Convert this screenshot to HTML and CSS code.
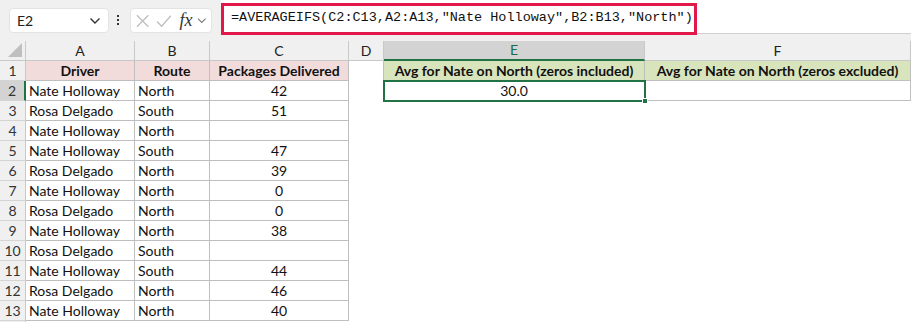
FILE: index.html
```html
<!DOCTYPE html>
<html>
<head>
<meta charset="utf-8">
<link rel="stylesheet" href="styles.css">
</head>
<body>
<div class="app">
  <div class="topbar">
    <div class="namebox">
      <span class="nb-text">E2</span>
      <svg class="chev" width="12" height="8" viewBox="0 0 12 8"><path d="M1.5 1.5 L6 6 L10.5 1.5" fill="none" stroke="#333" stroke-width="1.4"/></svg>
    </div>
    <div class="dots"><span></span><span></span><span></span></div>
    <div class="fxbox">
      <svg width="16" height="16" viewBox="0 0 16 16"><path d="M2 2 L14 14 M14 2 L2 14" stroke="#bdbdbd" stroke-width="1.3" fill="none"/></svg>
      <svg width="18" height="16" viewBox="0 0 18 16"><path d="M2 8.5 L7 13.5 L16.5 2.5" stroke="#bdbdbd" stroke-width="1.3" fill="none"/></svg>
      <span class="fx">fx</span>
      <svg width="10" height="7" viewBox="0 0 10 7"><path d="M1 1.5 L5 5.5 L9 1.5" fill="none" stroke="#777" stroke-width="1.1"/></svg>
    </div>
    <div class="formula">
      <span class="ftext">=AVERAGEIFS(C2:C13,A2:A13,"Nate Holloway",B2:B13,"North")</span>
      <div class="redbox"></div>
    </div>
  </div>
  <div class="grid">
    <div class="corner"><svg width="14" height="14" viewBox="0 0 14 14"><path d="M14 0 L14 14 L0 14 Z" fill="#bfbfbf"/></svg></div>
    <div class="ch">A</div><div class="ch">B</div><div class="ch">C</div><div class="ch">D</div><div class="ch sel">E</div><div class="ch">F</div>

    <div class="rh">1</div><div class="c bd hp b ctr">Driver</div><div class="c bd hp b ctr">Route</div><div class="c bd hp b ctr">Packages Delivered</div><div class="c br"></div><div class="c bd hg b ctr">Avg for Nate on North (zeros included)</div><div class="c bd hg b ctr">Avg for Nate on North (zeros excluded)</div>

    <div class="rh sel">2</div><div class="c bd">Nate Holloway</div><div class="c bd">North</div><div class="c bd ctr">42</div><div class="c br"></div><div class="c bd ctr active">30.0<span class="handle"></span></div><div class="c bd"></div>

    <div class="rh">3</div><div class="c bd">Rosa Delgado</div><div class="c bd">South</div><div class="c bd ctr">51</div><div class="c"></div><div class="c"></div><div class="c"></div>

    <div class="rh">4</div><div class="c bd">Nate Holloway</div><div class="c bd">North</div><div class="c bd ctr"></div><div class="c"></div><div class="c"></div><div class="c"></div>

    <div class="rh">5</div><div class="c bd">Nate Holloway</div><div class="c bd">South</div><div class="c bd ctr">47</div><div class="c"></div><div class="c"></div><div class="c"></div>

    <div class="rh">6</div><div class="c bd">Rosa Delgado</div><div class="c bd">North</div><div class="c bd ctr">39</div><div class="c"></div><div class="c"></div><div class="c"></div>

    <div class="rh">7</div><div class="c bd">Nate Holloway</div><div class="c bd">North</div><div class="c bd ctr">0</div><div class="c"></div><div class="c"></div><div class="c"></div>

    <div class="rh">8</div><div class="c bd">Rosa Delgado</div><div class="c bd">North</div><div class="c bd ctr">0</div><div class="c"></div><div class="c"></div><div class="c"></div>

    <div class="rh">9</div><div class="c bd">Nate Holloway</div><div class="c bd">North</div><div class="c bd ctr">38</div><div class="c"></div><div class="c"></div><div class="c"></div>

    <div class="rh">10</div><div class="c bd">Rosa Delgado</div><div class="c bd">South</div><div class="c bd ctr"></div><div class="c"></div><div class="c"></div><div class="c"></div>

    <div class="rh">11</div><div class="c bd">Nate Holloway</div><div class="c bd">South</div><div class="c bd ctr">44</div><div class="c"></div><div class="c"></div><div class="c"></div>

    <div class="rh">12</div><div class="c bd">Rosa Delgado</div><div class="c bd">North</div><div class="c bd ctr">46</div><div class="c"></div><div class="c"></div><div class="c"></div>

    <div class="rh">13</div><div class="c bd">Nate Holloway</div><div class="c bd">North</div><div class="c bd ctr">40</div><div class="c"></div><div class="c"></div><div class="c"></div>

    <div class="rh"></div><div class="c"></div><div class="c"></div><div class="c"></div><div class="c"></div><div class="c"></div><div class="c"></div>
  </div>
</div>
</body>
</html>
```

FILE: styles.css
```css
html, body {
  margin: 0;
  padding: 0;
  background: #ffffff;
  overflow: hidden;
}
.app {
  width: 911px;
  height: 322px;
  overflow: hidden;
  font-family: Lato, "Liberation Sans", sans-serif;
}
.topbar {
  height: 41px;
  background: #f0f0f0;
  display: flex;
  align-items: flex-start;
  box-sizing: border-box;
}
.namebox {
  margin: 8px 0 0 9px;
  width: 100px;
  height: 25px;
  box-sizing: border-box;
  background: #fff;
  border: 1px solid #e3e3e3;
  border-radius: 4px;
  display: flex;
  align-items: center;
  justify-content: space-between;
  padding: 0 7px 0 7px;
  font-size: 14px;
  color: #222;
}
.dots {
  margin: 15px 0 0 8px;
  width: 3px;
  display: flex;
  flex-direction: column;
  gap: 2px;
}
.dots span {
  width: 2px;
  height: 2px;
  background: #333;
}
.fxbox {
  margin: 8px 0 0 10px;
  width: 82px;
  height: 25px;
  box-sizing: border-box;
  background: #fff;
  border: 1px solid #e3e3e3;
  border-radius: 4px;
  display: flex;
  align-items: center;
  gap: 5px;
  padding: 0 4px 0 4px;
}
.fx {
  font-family: "Liberation Serif", serif;
  font-style: italic;
  font-size: 18px;
  color: #333;
  margin-left: 2px;
}
.formula {
  position: relative;
  margin-left: 9px;
  flex: 1;
  height: 34px;
  background: #fff;
  border-bottom: 1px solid #d0d0d0;
  border-bottom-left-radius: 4px;
  display: flex;
  align-items: center;
  padding-left: 10px;
  padding-top: 2px;
  box-sizing: border-box;
}
.ftext {
  font-family: "Liberation Mono", monospace;
  font-size: 13.5px;
  color: #111;
}
.redbox {
  position: absolute;
  left: 0;
  top: 3px;
  width: 476px;
  height: 32px;
  box-sizing: border-box;
  border: 3px solid #e2184b;
}
.grid {
  display: grid;
  grid-template-columns: 26px 109px 75px 139px 35px 261px 266px;
  grid-auto-rows: 20px;
  font-size: 14px;
  color: #111;
}
.corner {
  background: #f0f0f0;
  border-right: 1px solid #c8c8c8;
  border-bottom: 1px solid #c8c8c8;
  box-sizing: border-box;
  display: flex;
  align-items: flex-end;
  justify-content: flex-end;
  padding: 0 3px 3px 0;
}
.ch {
  background: #f0f0f0;
  border-right: 1px solid #c8c8c8;
  border-bottom: 1px solid #c8c8c8;
  box-sizing: border-box;
  text-align: center;
  line-height: 19px;
  color: #222;
  font-size: 14px;
}
.ch.sel {
  background: #d3d3d3;
  border-bottom: 2px solid #217346;
  color: #1a6b3e;
  line-height: 18px;
}
.rh {
  background: #f0f0f0;
  border-right: 1px solid #c8c8c8;
  border-bottom: 1px solid #d4d4d4;
  box-sizing: border-box;
  text-align: center;
  line-height: 19px;
  color: #333;
  font-size: 14px;
}
.rh.sel {
  background: #d3d3d3;
  border-right: 2px solid #217346;
}
.c {
  box-sizing: border-box;
  line-height: 19px;
  padding: 0 3px;
  white-space: nowrap;
  position: relative;
}
.bd {
  border-right: 1px solid #bfbfbf;
  border-bottom: 1px solid #bfbfbf;
}
.br {
  border-right: 1px solid #bfbfbf;
}
.ctr { text-align: center; }
.b { font-weight: bold; }
.hp { background: #f2dcdb; }
.hg { background: #d8e4bc; }
.active {
  outline: 2px solid #217346;
  outline-offset: -1px;
  z-index: 2;
}
.handle {
  position: absolute;
  right: -4px;
  bottom: -4px;
  width: 6px;
  height: 6px;
  background: #217346;
  border: 1px solid #fff;
  box-sizing: border-box;
}
```
